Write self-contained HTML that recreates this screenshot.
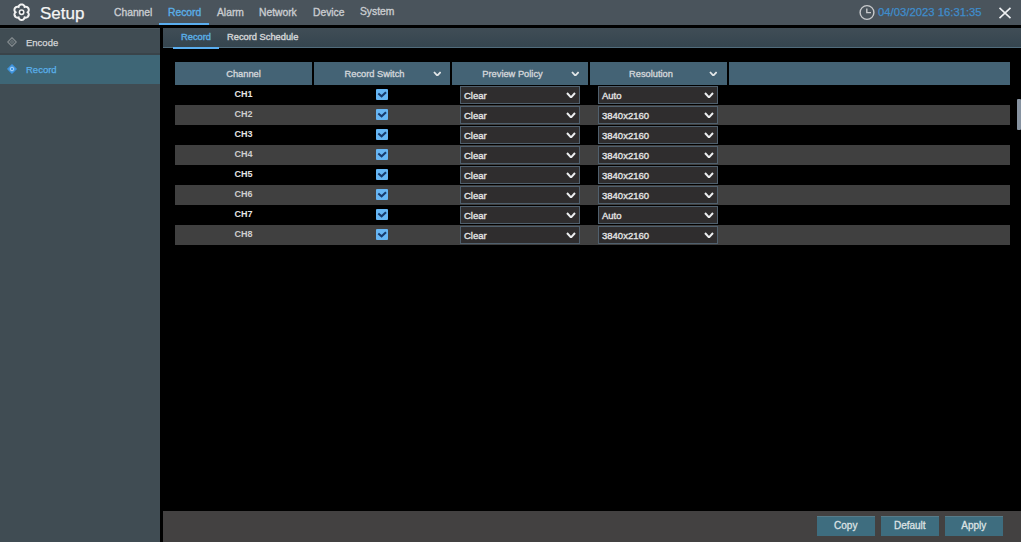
<!DOCTYPE html>
<html><head><meta charset="utf-8">
<style>
*{margin:0;padding:0;box-sizing:border-box}
html,body{width:1024px;height:542px;overflow:hidden;background:#fff;font-family:"Liberation Sans",sans-serif;-webkit-text-stroke:0.25px}
.a{position:absolute}
#app{position:absolute;left:0;top:0;width:1021px;height:542px;background:#000}
#hdr{left:0;top:0;width:1021px;height:25px;background:#4a545c}
.nav{top:7px;font-size:10.3px;color:#c9ccd0;white-space:nowrap;line-height:12px;-webkit-text-stroke:0.35px}
#side{left:0;top:28px;width:160px;height:514px;background:#404c53}
.si{left:0;width:160px;font-size:9.5px;line-height:12px;white-space:nowrap}
#sub{left:163px;top:28px;width:858px;height:20px;background:linear-gradient(#404d56,#35454f);border-bottom:1px solid #516c7c}
.st{top:31px;font-size:9.3px;line-height:13px;white-space:nowrap;-webkit-text-stroke:0.4px}
.th{top:62px;height:23px;background:#446375;font-size:9.3px;line-height:24px;color:#d2d6da;text-align:center;white-space:nowrap;-webkit-text-stroke:0.35px}
.row{left:175px;width:835px;height:20px}
.g{background:#404040}
.ch{left:175px;width:137px;text-align:center;font-size:9px;font-weight:bold;line-height:18px;color:#e6e6e6;-webkit-text-stroke:0}
.ch2{color:#cfcfcf}
.cb{left:376px;width:12px;height:11px;background:#66b6f4;border-radius:1px}
.cb svg{display:block}
.thp{padding-right:15px}
.dd{width:120px;height:18px;background:#2f2d2e;border:1px solid #50606e;font-size:9.5px;-webkit-text-stroke:0.35px;line-height:17px;color:#e4e4e4;padding-left:3px;white-space:nowrap}
#bot{left:163px;top:510.5px;width:858px;height:32px;background:#434141}
.btn{top:516px;width:57.5px;height:20px;background:#3e6d7f;border-top:1px solid #587c8a;color:#dde2e4;font-size:10px;line-height:18px;text-align:center;-webkit-text-stroke:0.3px}
</style></head><body>
<div id="app">
  <div id="hdr" class="a"></div>
  <!-- gear -->
  <svg class="a" style="left:12px;top:3px" width="20" height="19" viewBox="0 0 20 19">
    <path id="gear" d="M15.65 9.20 L16.04 8.86 L16.30 8.50 L16.49 8.11 L16.64 7.70 L16.72 7.29 L16.76 6.87 L16.74 6.46 L16.66 6.06 L16.53 5.67 L16.35 5.30 L16.13 4.96 L15.85 4.66 L15.54 4.39 L15.19 4.16 L14.82 3.98 L14.41 3.85 L13.99 3.78 L13.56 3.75 L13.11 3.79 L12.63 3.96 L12.53 3.46 L12.34 3.05 L12.10 2.68 L11.82 2.36 L11.51 2.08 L11.16 1.84 L10.80 1.65 L10.41 1.51 L10.01 1.43 L9.60 1.40 L9.19 1.43 L8.79 1.51 L8.40 1.65 L8.04 1.84 L7.69 2.08 L7.38 2.36 L7.10 2.68 L6.86 3.05 L6.67 3.46 L6.57 3.96 L6.09 3.79 L5.64 3.75 L5.21 3.78 L4.79 3.85 L4.38 3.98 L4.01 4.16 L3.66 4.39 L3.35 4.66 L3.07 4.96 L2.85 5.30 L2.67 5.67 L2.54 6.06 L2.46 6.46 L2.44 6.87 L2.48 7.29 L2.56 7.70 L2.71 8.11 L2.90 8.50 L3.16 8.86 L3.55 9.20 L3.16 9.54 L2.90 9.90 L2.71 10.29 L2.56 10.70 L2.48 11.11 L2.44 11.53 L2.46 11.94 L2.54 12.34 L2.67 12.73 L2.85 13.10 L3.07 13.44 L3.35 13.74 L3.66 14.01 L4.01 14.24 L4.38 14.42 L4.79 14.55 L5.21 14.62 L5.64 14.65 L6.09 14.61 L6.57 14.44 L6.67 14.94 L6.86 15.35 L7.10 15.72 L7.38 16.04 L7.69 16.32 L8.04 16.56 L8.40 16.75 L8.79 16.89 L9.19 16.97 L9.60 17.00 L10.01 16.97 L10.41 16.89 L10.80 16.75 L11.16 16.56 L11.51 16.32 L11.82 16.04 L12.10 15.72 L12.34 15.35 L12.53 14.94 L12.63 14.44 L13.11 14.61 L13.56 14.65 L13.99 14.62 L14.41 14.55 L14.82 14.42 L15.19 14.24 L15.54 14.01 L15.85 13.74 L16.13 13.44 L16.35 13.10 L16.53 12.73 L16.66 12.34 L16.74 11.94 L16.76 11.53 L16.72 11.11 L16.64 10.70 L16.49 10.29 L16.30 9.90 L16.04 9.54Z" fill="none" stroke="#f2f2f2" stroke-width="2"/>
    <circle cx="9.6" cy="9.2" r="2.2" fill="none" stroke="#f2f2f2" stroke-width="1.5"/><circle cx="9.6" cy="9.2" r="0.8" fill="#1e252b"/>
  </svg>
  <div class="a" style="left:40px;top:4px;font-size:17px;line-height:20px;color:#f4f4f4">Setup</div>
  <div class="a nav" style="left:114px">Channel</div>
  <div class="a nav" style="left:168px;color:#5aaee6">Record</div>
  <div class="a" style="left:159px;top:23px;width:50px;height:2px;background:#5aaef0"></div>
  <div class="a nav" style="left:217px">Alarm</div>
  <div class="a nav" style="left:259px">Network</div>
  <div class="a nav" style="left:313px">Device</div>
  <div class="a nav" style="left:360px;top:6px">System</div>
  <!-- clock -->
  <svg class="a" style="left:858px;top:4px" width="18" height="18" viewBox="0 0 18 18">
    <circle cx="9" cy="8.5" r="6.9" fill="none" stroke="#c8cacc" stroke-width="1.4"/>
    <path d="M8.8 4.6V8.6H13" fill="none" stroke="#c8cacc" stroke-width="1.4"/>
  </svg>
  <div class="a" style="left:878px;top:6px;font-size:11.3px;line-height:12px;color:#3f8dcc;white-space:nowrap">04/03/2023 16:31:35</div>
  <svg class="a" style="left:998px;top:7px" width="14" height="12" viewBox="0 0 14 12">
    <path d="M1.5 0.8L12.5 11.2M12.5 0.8L1.5 11.2" stroke="#eef0f2" stroke-width="1.6"/>
  </svg>

  <div id="side" class="a"></div>
  <div class="a" style="left:0;top:28px;width:160px;height:1px;background:#4a565d"></div>
  <div class="a" style="left:0;top:53px;width:160px;height:2px;background:#394349"></div>
  <div class="a" style="left:0;top:55px;width:160px;height:29px;background:#3e6676"></div>
  <svg class="a" style="left:7px;top:37px" width="10" height="10" viewBox="0 0 10 10">
    <path d="M5 0.8L9.2 5L5 9.2L0.8 5Z" fill="none" stroke="#7e868a" stroke-width="1.3" stroke-linejoin="round"/>
    <circle cx="5" cy="5" r="1.3" fill="none" stroke="#7e868a" stroke-width="0.8"/>
  </svg>
  <div class="a si" style="left:26px;top:37px;color:#d4d6d8">Encode</div>
  <svg class="a" style="left:7px;top:64px" width="10" height="10" viewBox="0 0 10 10">
    <path d="M5 0.3L9.7 5L5 9.7L0.3 5Z" fill="#3f95e0" stroke="#3f95e0" stroke-width="0.6" stroke-linejoin="round"/>
    <circle cx="5" cy="5" r="1.8" fill="none" stroke="#b8dcff" stroke-width="0.9"/>
  </svg>
  <div class="a si" style="left:26px;top:64px;color:#5ab0ea">Record</div>

  <div id="sub" class="a"></div>
  <div class="a st" style="left:181px;color:#5aaee6">Record</div>
  <div class="a" style="left:173px;top:46.5px;width:46px;height:2px;background:#5aaef0"></div>
  <div class="a st" style="left:227px;color:#d2d4d6">Record Schedule</div>

  <!-- table header -->
  <div class="a th" style="left:175px;width:137px">Channel</div>
  <div class="a th thp" style="left:314px;width:136px">Record Switch</div>
  <div class="a th thp" style="left:452px;width:136px">Preview Policy</div>
  <div class="a th thp" style="left:590px;width:137px">Resolution</div>
  <div class="a th" style="left:729px;width:281px"></div>

  <svg class="a" style="left:432.8px;top:70.5px" width="8.6" height="5.6" viewBox="0 0 8.6 5.6"><path d="M1 1L4.3 4.6L7.6 1" fill="none" stroke="#e2e6e8" stroke-width="1.8"/></svg>
<svg class="a" style="left:570.8px;top:70.5px" width="8.6" height="5.6" viewBox="0 0 8.6 5.6"><path d="M1 1L4.3 4.6L7.6 1" fill="none" stroke="#e2e6e8" stroke-width="1.8"/></svg>
<svg class="a" style="left:708.8px;top:70.5px" width="8.6" height="5.6" viewBox="0 0 8.6 5.6"><path d="M1 1L4.3 4.6L7.6 1" fill="none" stroke="#e2e6e8" stroke-width="1.8"/></svg>
<div class="a ch" style="top:85px">CH1</div>
<div class="a cb" style="top:89px"><svg width="12" height="11" viewBox="0 0 12 11"><path d="M2.3 4.4L5.6 7.3L10 3.3" fill="none" stroke="#173a6a" stroke-width="2"/></svg></div>
<div class="a dd" style="left:460px;top:86px">Clear</div>
<svg class="a" style="left:566px;top:92px" width="10" height="6.4" viewBox="0 0 10 6.4"><path d="M1 1L5.0 5.4L9 1" fill="none" stroke="#eceef0" stroke-width="2"/></svg>
<div class="a dd" style="left:598px;top:86px">Auto</div>
<svg class="a" style="left:704px;top:92px" width="10" height="6.4" viewBox="0 0 10 6.4"><path d="M1 1L5.0 5.4L9 1" fill="none" stroke="#eceef0" stroke-width="2"/></svg>
<div class="a row g" style="top:105px"></div>
<div class="a ch ch2" style="top:105px">CH2</div>
<div class="a cb" style="top:109px"><svg width="12" height="11" viewBox="0 0 12 11"><path d="M2.3 4.4L5.6 7.3L10 3.3" fill="none" stroke="#173a6a" stroke-width="2"/></svg></div>
<div class="a dd" style="left:460px;top:106px">Clear</div>
<svg class="a" style="left:566px;top:112px" width="10" height="6.4" viewBox="0 0 10 6.4"><path d="M1 1L5.0 5.4L9 1" fill="none" stroke="#eceef0" stroke-width="2"/></svg>
<div class="a dd" style="left:598px;top:106px">3840x2160</div>
<svg class="a" style="left:704px;top:112px" width="10" height="6.4" viewBox="0 0 10 6.4"><path d="M1 1L5.0 5.4L9 1" fill="none" stroke="#eceef0" stroke-width="2"/></svg>
<div class="a ch" style="top:125px">CH3</div>
<div class="a cb" style="top:129px"><svg width="12" height="11" viewBox="0 0 12 11"><path d="M2.3 4.4L5.6 7.3L10 3.3" fill="none" stroke="#173a6a" stroke-width="2"/></svg></div>
<div class="a dd" style="left:460px;top:126px">Clear</div>
<svg class="a" style="left:566px;top:132px" width="10" height="6.4" viewBox="0 0 10 6.4"><path d="M1 1L5.0 5.4L9 1" fill="none" stroke="#eceef0" stroke-width="2"/></svg>
<div class="a dd" style="left:598px;top:126px">3840x2160</div>
<svg class="a" style="left:704px;top:132px" width="10" height="6.4" viewBox="0 0 10 6.4"><path d="M1 1L5.0 5.4L9 1" fill="none" stroke="#eceef0" stroke-width="2"/></svg>
<div class="a row g" style="top:145px"></div>
<div class="a ch ch2" style="top:145px">CH4</div>
<div class="a cb" style="top:149px"><svg width="12" height="11" viewBox="0 0 12 11"><path d="M2.3 4.4L5.6 7.3L10 3.3" fill="none" stroke="#173a6a" stroke-width="2"/></svg></div>
<div class="a dd" style="left:460px;top:146px">Clear</div>
<svg class="a" style="left:566px;top:152px" width="10" height="6.4" viewBox="0 0 10 6.4"><path d="M1 1L5.0 5.4L9 1" fill="none" stroke="#eceef0" stroke-width="2"/></svg>
<div class="a dd" style="left:598px;top:146px">3840x2160</div>
<svg class="a" style="left:704px;top:152px" width="10" height="6.4" viewBox="0 0 10 6.4"><path d="M1 1L5.0 5.4L9 1" fill="none" stroke="#eceef0" stroke-width="2"/></svg>
<div class="a ch" style="top:165px">CH5</div>
<div class="a cb" style="top:169px"><svg width="12" height="11" viewBox="0 0 12 11"><path d="M2.3 4.4L5.6 7.3L10 3.3" fill="none" stroke="#173a6a" stroke-width="2"/></svg></div>
<div class="a dd" style="left:460px;top:166px">Clear</div>
<svg class="a" style="left:566px;top:172px" width="10" height="6.4" viewBox="0 0 10 6.4"><path d="M1 1L5.0 5.4L9 1" fill="none" stroke="#eceef0" stroke-width="2"/></svg>
<div class="a dd" style="left:598px;top:166px">3840x2160</div>
<svg class="a" style="left:704px;top:172px" width="10" height="6.4" viewBox="0 0 10 6.4"><path d="M1 1L5.0 5.4L9 1" fill="none" stroke="#eceef0" stroke-width="2"/></svg>
<div class="a row g" style="top:185px"></div>
<div class="a ch ch2" style="top:185px">CH6</div>
<div class="a cb" style="top:189px"><svg width="12" height="11" viewBox="0 0 12 11"><path d="M2.3 4.4L5.6 7.3L10 3.3" fill="none" stroke="#173a6a" stroke-width="2"/></svg></div>
<div class="a dd" style="left:460px;top:186px">Clear</div>
<svg class="a" style="left:566px;top:192px" width="10" height="6.4" viewBox="0 0 10 6.4"><path d="M1 1L5.0 5.4L9 1" fill="none" stroke="#eceef0" stroke-width="2"/></svg>
<div class="a dd" style="left:598px;top:186px">3840x2160</div>
<svg class="a" style="left:704px;top:192px" width="10" height="6.4" viewBox="0 0 10 6.4"><path d="M1 1L5.0 5.4L9 1" fill="none" stroke="#eceef0" stroke-width="2"/></svg>
<div class="a ch" style="top:205px">CH7</div>
<div class="a cb" style="top:209px"><svg width="12" height="11" viewBox="0 0 12 11"><path d="M2.3 4.4L5.6 7.3L10 3.3" fill="none" stroke="#173a6a" stroke-width="2"/></svg></div>
<div class="a dd" style="left:460px;top:206px">Clear</div>
<svg class="a" style="left:566px;top:212px" width="10" height="6.4" viewBox="0 0 10 6.4"><path d="M1 1L5.0 5.4L9 1" fill="none" stroke="#eceef0" stroke-width="2"/></svg>
<div class="a dd" style="left:598px;top:206px">Auto</div>
<svg class="a" style="left:704px;top:212px" width="10" height="6.4" viewBox="0 0 10 6.4"><path d="M1 1L5.0 5.4L9 1" fill="none" stroke="#eceef0" stroke-width="2"/></svg>
<div class="a row g" style="top:225px"></div>
<div class="a ch ch2" style="top:225px">CH8</div>
<div class="a cb" style="top:229px"><svg width="12" height="11" viewBox="0 0 12 11"><path d="M2.3 4.4L5.6 7.3L10 3.3" fill="none" stroke="#173a6a" stroke-width="2"/></svg></div>
<div class="a dd" style="left:460px;top:226px">Clear</div>
<svg class="a" style="left:566px;top:232px" width="10" height="6.4" viewBox="0 0 10 6.4"><path d="M1 1L5.0 5.4L9 1" fill="none" stroke="#eceef0" stroke-width="2"/></svg>
<div class="a dd" style="left:598px;top:226px">3840x2160</div>
<svg class="a" style="left:704px;top:232px" width="10" height="6.4" viewBox="0 0 10 6.4"><path d="M1 1L5.0 5.4L9 1" fill="none" stroke="#eceef0" stroke-width="2"/></svg>

  <div id="bot" class="a"></div>
  <div class="a btn" style="left:817px">Copy</div>
  <div class="a btn" style="left:881px">Default</div>
  <div class="a btn" style="left:945px">Apply</div>

  <div class="a" style="left:1017px;top:99px;width:4px;height:31px;background:#8692a0;border-radius:1px"></div>
</div>
<div class="a" style="left:1021px;top:0;width:3px;height:542px;background:#fff"></div>
</body></html>
